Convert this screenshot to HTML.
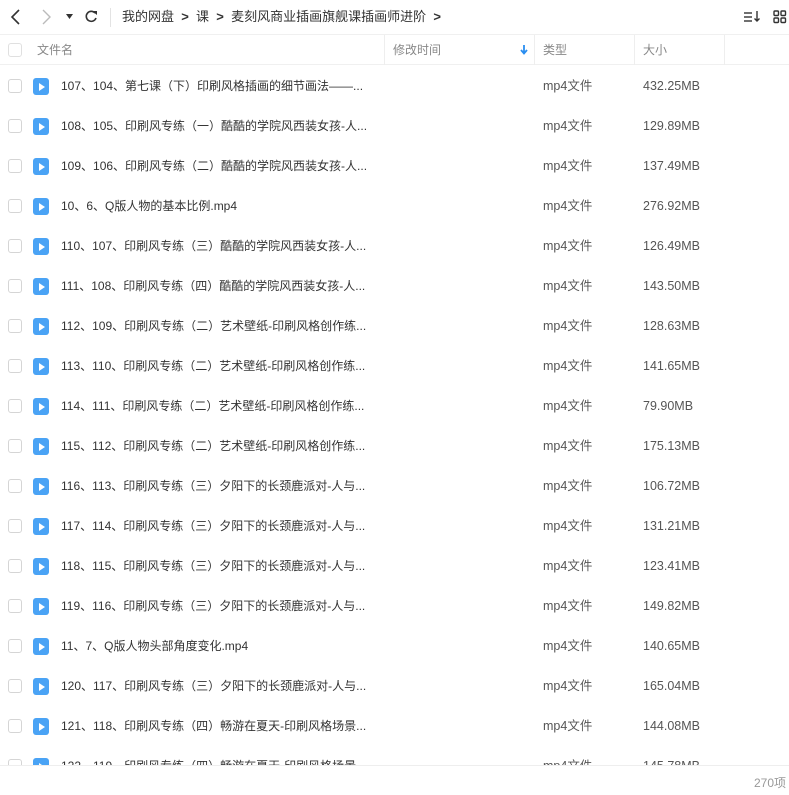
<!DOCTYPE html>
<html><head><meta charset="utf-8">
<style>
*{margin:0;padding:0;box-sizing:border-box}
body{width:789px;height:795px;overflow:hidden;background:#fff;font-family:"Liberation Sans","Noto Sans CJK SC",sans-serif;color:#333;position:relative}
.top{position:absolute;left:0;top:0;width:789px;height:35px;border-bottom:1px solid #f0f0f0}
.hdr{position:absolute;left:0;top:35px;width:789px;height:30px;border-bottom:1px solid #f0f0f0;font-size:12px;color:#888}
.hdr span{position:absolute;top:0;line-height:30px}
.sep{position:absolute;top:0;width:1px;height:30px;background:#eee}
.cb{position:absolute;width:14px;height:14px;border:1px solid #d5d5d5;border-radius:3px;background:#fff}
.list{position:absolute;left:0;top:66px;width:789px;height:699px;overflow:hidden}
.row{position:absolute;left:0;height:40px;width:789px;font-size:12.5px;color:#333;line-height:40px}
.row .cb{left:8px;top:13px}
.row .ic{position:absolute;left:33px;top:12px;width:16px;height:17px;background:#4aa3f5;border-radius:3px}
.row .ic:after{content:"";position:absolute;left:6px;top:5px;border-left:6px solid #fff;border-top:4px solid transparent;border-bottom:4px solid transparent}
.row .n{position:absolute;left:61px;top:0;white-space:nowrap;font-size:12px}
.row .t{position:absolute;left:543px;top:0;color:#555}
.row .s{position:absolute;left:643px;top:0;color:#555}
.foot{position:absolute;left:0;top:765px;width:789px;height:30px;border-top:1px solid #eee;background:#fff}
.foot span{position:absolute;right:3px;top:8px;font-size:12px;color:#999}
</style></head><body>
<div class="top">
<svg width="789" height="35" style="position:absolute;left:0;top:0">
<path d="M19 10 L12 17 L19 24" stroke="#333" stroke-width="1.6" fill="none"/>
<path d="M43 10 L50 17 L43 24" stroke="#bbb" stroke-width="1.4" fill="none"/>
<path d="M66 14 L73 14 L69.5 19 Z" fill="#333"/>
<path d="M95 13 A5 5 0 1 0 96 18" stroke="#333" stroke-width="1.6" fill="none"/>
<path d="M92 11 L97 11 L97 15 Z" fill="#333"/>
<line x1="110.5" y1="8" x2="110.5" y2="27" stroke="#e3e3e3"/>
<g stroke="#333" stroke-width="1.4" fill="none">
<line x1="744" y1="13" x2="752" y2="13"/><line x1="744" y1="17" x2="752" y2="17"/><line x1="744" y1="21" x2="752" y2="21"/>
<path d="M757 11 V21 M754.5 18.5 L757 21 L759.5 18.5"/>
<rect x="774" y="11" width="4.5" height="4.5" rx="1"/><rect x="781" y="11" width="4.5" height="4.5" rx="1"/>
<rect x="774" y="18" width="4.5" height="4.5" rx="1"/><rect x="781" y="18" width="4.5" height="4.5" rx="1"/>
</g>
</svg>
<div style="position:absolute;left:122px;top:0;line-height:34px;font-size:13px;color:#333;white-space:nowrap">我的网盘 &nbsp;<b>&gt;</b>&nbsp; 课 &nbsp;<b>&gt;</b>&nbsp; 麦刻风商业插画旗舰课插画师进阶 &nbsp;<b>&gt;</b></div>
</div>
<div class="hdr">
<div class="cb" style="left:8px;top:8px;border-color:#e0e0e0"></div>
<span style="left:37px">文件名</span>
<div class="sep" style="left:384px"></div>
<span style="left:393px">修改时间</span>
<svg style="position:absolute;left:520px;top:10px" width="8" height="10"><path d="M4 0 V8 M1 5 L4 8.5 L7 5" stroke="#2a8ef0" stroke-width="1.8" fill="none"/></svg>
<div class="sep" style="left:534px"></div>
<span style="left:543px">类型</span>
<div class="sep" style="left:634px"></div>
<span style="left:643px">大小</span>
<div class="sep" style="left:724px"></div>
</div>
<div class="list">
<div class="row" style="top:0"><div class="cb"></div><div class="ic"></div><div class="n">107、104、第七课（下）印刷风格插画的细节画法——...</div><div class="t">mp4文件</div><div class="s">432.25MB</div></div>
<div class="row" style="top:40px"><div class="cb"></div><div class="ic"></div><div class="n">108、105、印刷风专练（一）酷酷的学院风西装女孩-人...</div><div class="t">mp4文件</div><div class="s">129.89MB</div></div>
<div class="row" style="top:80px"><div class="cb"></div><div class="ic"></div><div class="n">109、106、印刷风专练（二）酷酷的学院风西装女孩-人...</div><div class="t">mp4文件</div><div class="s">137.49MB</div></div>
<div class="row" style="top:120px"><div class="cb"></div><div class="ic"></div><div class="n">10、6、Q版人物的基本比例.mp4</div><div class="t">mp4文件</div><div class="s">276.92MB</div></div>
<div class="row" style="top:160px"><div class="cb"></div><div class="ic"></div><div class="n">110、107、印刷风专练（三）酷酷的学院风西装女孩-人...</div><div class="t">mp4文件</div><div class="s">126.49MB</div></div>
<div class="row" style="top:200px"><div class="cb"></div><div class="ic"></div><div class="n">111、108、印刷风专练（四）酷酷的学院风西装女孩-人...</div><div class="t">mp4文件</div><div class="s">143.50MB</div></div>
<div class="row" style="top:240px"><div class="cb"></div><div class="ic"></div><div class="n">112、109、印刷风专练（二）艺术壁纸-印刷风格创作练...</div><div class="t">mp4文件</div><div class="s">128.63MB</div></div>
<div class="row" style="top:280px"><div class="cb"></div><div class="ic"></div><div class="n">113、110、印刷风专练（二）艺术壁纸-印刷风格创作练...</div><div class="t">mp4文件</div><div class="s">141.65MB</div></div>
<div class="row" style="top:320px"><div class="cb"></div><div class="ic"></div><div class="n">114、111、印刷风专练（二）艺术壁纸-印刷风格创作练...</div><div class="t">mp4文件</div><div class="s">79.90MB</div></div>
<div class="row" style="top:360px"><div class="cb"></div><div class="ic"></div><div class="n">115、112、印刷风专练（二）艺术壁纸-印刷风格创作练...</div><div class="t">mp4文件</div><div class="s">175.13MB</div></div>
<div class="row" style="top:400px"><div class="cb"></div><div class="ic"></div><div class="n">116、113、印刷风专练（三）夕阳下的长颈鹿派对-人与...</div><div class="t">mp4文件</div><div class="s">106.72MB</div></div>
<div class="row" style="top:440px"><div class="cb"></div><div class="ic"></div><div class="n">117、114、印刷风专练（三）夕阳下的长颈鹿派对-人与...</div><div class="t">mp4文件</div><div class="s">131.21MB</div></div>
<div class="row" style="top:480px"><div class="cb"></div><div class="ic"></div><div class="n">118、115、印刷风专练（三）夕阳下的长颈鹿派对-人与...</div><div class="t">mp4文件</div><div class="s">123.41MB</div></div>
<div class="row" style="top:520px"><div class="cb"></div><div class="ic"></div><div class="n">119、116、印刷风专练（三）夕阳下的长颈鹿派对-人与...</div><div class="t">mp4文件</div><div class="s">149.82MB</div></div>
<div class="row" style="top:560px"><div class="cb"></div><div class="ic"></div><div class="n">11、7、Q版人物头部角度变化.mp4</div><div class="t">mp4文件</div><div class="s">140.65MB</div></div>
<div class="row" style="top:600px"><div class="cb"></div><div class="ic"></div><div class="n">120、117、印刷风专练（三）夕阳下的长颈鹿派对-人与...</div><div class="t">mp4文件</div><div class="s">165.04MB</div></div>
<div class="row" style="top:640px"><div class="cb"></div><div class="ic"></div><div class="n">121、118、印刷风专练（四）畅游在夏天-印刷风格场景...</div><div class="t">mp4文件</div><div class="s">144.08MB</div></div>
<div class="row" style="top:680px"><div class="cb"></div><div class="ic"></div><div class="n">122、119、印刷风专练（四）畅游在夏天-印刷风格场景...</div><div class="t">mp4文件</div><div class="s">145.78MB</div></div>
</div>
<div class="foot"><span>270项</span></div>
</body></html>
